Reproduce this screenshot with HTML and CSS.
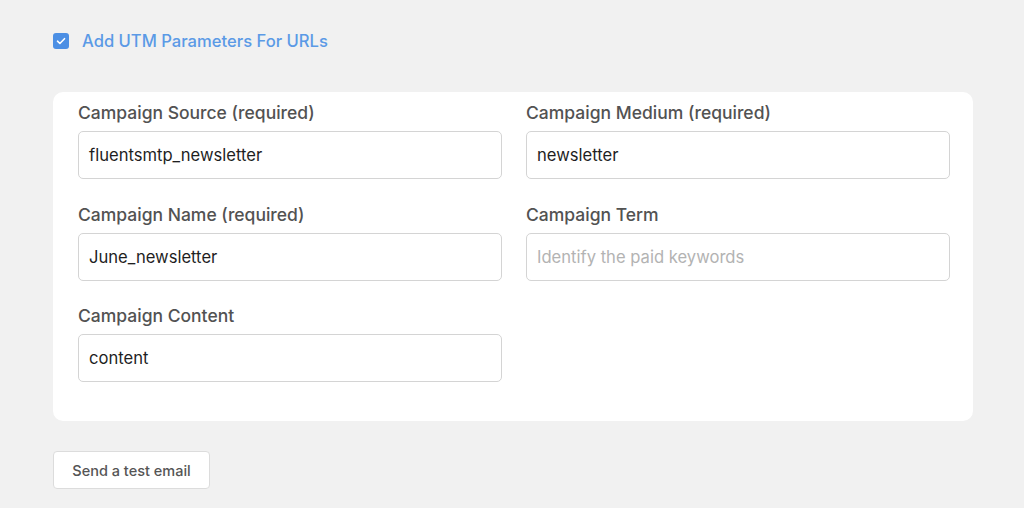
FILE: index.html
```html
<!DOCTYPE html>
<html lang="en">
<head>
<meta charset="utf-8">
<title>UTM Parameters</title>
<link rel="stylesheet" href="styles.css">
</head>
<body>
<div class="page">
  <label class="check-row">
    <span class="checkbox">
      <svg viewBox="0 0 16 16" width="16" height="16"><path d="M4.5 8.2l2.4 2.3 4.6-4.8" fill="none" stroke="#fff" stroke-width="1.6" stroke-linecap="round" stroke-linejoin="round"/></svg>
    </span>
    <span class="check-label">Add UTM Parameters For URLs</span>
  </label>

  <div class="card">
    <div class="grid">
      <div class="field">
        <div class="label">Campaign Source (required)</div>
        <div class="input">fluentsmtp_newsletter</div>
      </div>
      <div class="field">
        <div class="label">Campaign Medium (required)</div>
        <div class="input">newsletter</div>
      </div>
      <div class="field">
        <div class="label">Campaign Name (required)</div>
        <div class="input">June_newsletter</div>
      </div>
      <div class="field">
        <div class="label">Campaign Term</div>
        <div class="input placeholder">Identify the paid keywords</div>
      </div>
      <div class="field">
        <div class="label">Campaign Content</div>
        <div class="input">content</div>
      </div>
    </div>
  </div>

  <div class="actions">
    <button class="btn">Send a test email</button>
  </div>
</div>
</body>
</html>
```

FILE: styles.css
```css
html, body {
  margin: 0;
  padding: 0;
  background: #f1f1f1;
  font-family: Inter, "Liberation Sans", Arial, sans-serif;
}

.page {
  padding: 33px 51px 0 53px;
}

.check-row {
  display: flex;
  align-items: center;
  gap: 13px;
  height: 16px;
}

.checkbox {
  width: 16px;
  height: 16px;
  border-radius: 3px;
  background: #4c8fe4;
  display: flex;
}

.check-label {
  font-size: 16.6px;
  font-weight: 500;
  color: #5b9ae6;
  line-height: 16px;
}

.card {
  margin-top: 43px;
  width: 920px;
  box-sizing: border-box;
  background: #fff;
  border-radius: 10px;
  padding: 9px 23px 39px 25px;
}

.grid {
  display: grid;
  grid-template-columns: 424px 424px;
  column-gap: 24px;
  row-gap: 23.5px;
}

.label {
  font-size: 17.5px;
  font-weight: 500;
  line-height: 24px;
  color: #525252;
  margin-bottom: 6px;
}

.input {
  height: 48px;
  box-sizing: border-box;
  border: 1px solid #d4d4d4;
  border-radius: 5px;
  padding: 0 10px;
  display: flex;
  align-items: center;
  font-size: 16.6px;
  color: #1f1f1f;
}

.input.placeholder {
  color: #b3b3b3;
}

.actions {
  margin-top: 30px;
}

.btn {
  height: 38px;
  width: 157px;
  background: #fff;
  border: 1px solid #dcdcdc;
  border-radius: 4px;
  font-family: Inter, "Liberation Sans", Arial, sans-serif;
  font-size: 14.5px;
  font-weight: 500;
  color: #555;
  padding: 0;
}
```
